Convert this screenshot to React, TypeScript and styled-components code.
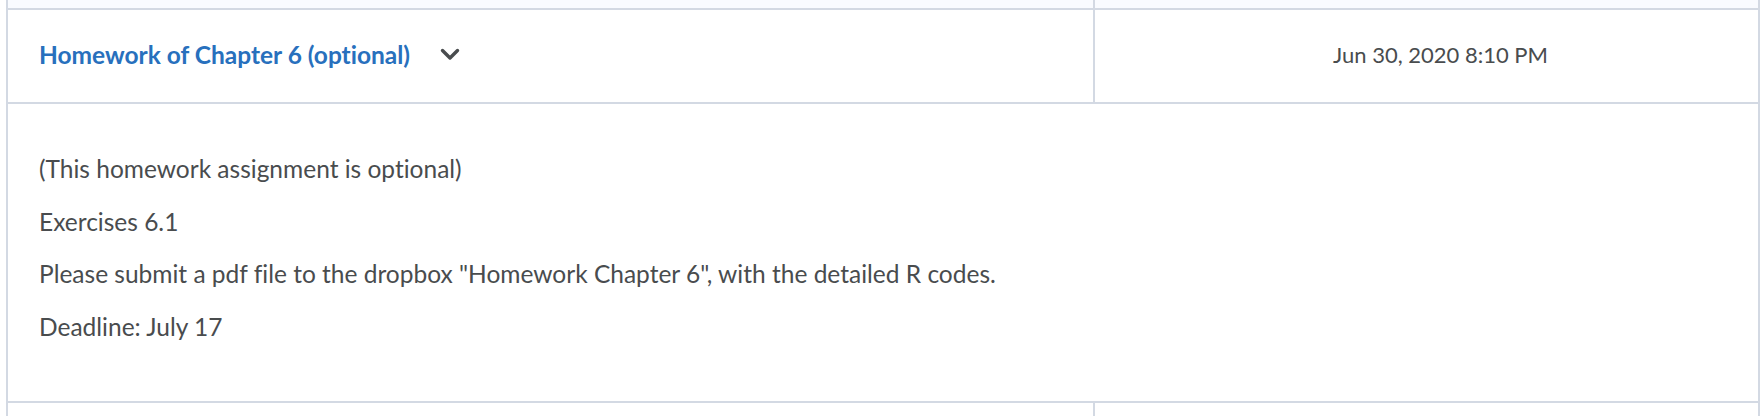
import React from "react";
import styled, { createGlobalStyle } from "styled-components";

const Global = createGlobalStyle`
  html, body { margin: 0; padding: 0; background: #ffffff; }
  body {
    font-family: Lato, "Open Sans", "Liberation Sans", sans-serif;
    color: #494c4e;
    font-variant-ligatures: none;
    font-feature-settings: "liga" 0, "clig" 0;
  }
`;

const Page = styled.div`
  padding-left: 6px;
  width: 1754px;
  height: 416px;
  overflow: hidden;
`;

const Board = styled.div`
  border-left: 2px solid #d3d9e3;
  border-right: 2px solid #d3d9e3;
`;

const Row = styled.div<{ $height: number; $tint?: boolean; $last?: boolean }>`
  display: grid;
  grid-template-columns: 1087px 1fr;
  height: ${(p) => p.$height}px;
  box-sizing: content-box;
  background: ${(p) => (p.$tint ? "#f9fbff" : "#ffffff")};
  border-bottom: ${(p) => (p.$last ? "none" : "2px solid #d3d9e3")};
`;

const Cell = styled.div<{ $center?: boolean }>`
  display: flex;
  align-items: center;
  justify-content: ${(p) => (p.$center ? "center" : "flex-start")};
  padding-left: ${(p) => (p.$center ? 28 : 31)}px;
  padding-bottom: 4px;
  &:first-child {
    border-right: 2px solid #d3d9e3;
  }
`;

const TitleLink = styled.a`
  font-family: Lato, "Open Sans", sans-serif;
  font-weight: 700;
  font-size: 24.5px;
  color: #2870bd;
  text-decoration: none;
  cursor: pointer;
`;

const Toggle = styled.button`
  display: inline-flex;
  align-items: center;
  justify-content: center;
  margin-left: 28px;
  padding: 0;
  border: none;
  background: transparent;
  width: 24px;
  height: 24px;
  color: #494c4e;
  cursor: pointer;
`;

const DateText = styled.span`
  font-size: 22px;
  color: #494c4e;
`;

const Detail = styled.div`
  height: 299px;
  border-bottom: 2px solid #d3d9e3;
  padding: 50px 31px 0;
  box-sizing: border-box;
  display: flex;
  flex-direction: column;
  gap: 22.5px;
`;

const Para = styled.p`
  margin: 0;
  font-size: 24.5px;
  line-height: 30px;
  color: #494c4e;
`;

export default function App() {
  return (
    <>
      <Global />
      <Page>
        <Board>
          <Row $height={8} $tint>
            <Cell />
            <Cell />
          </Row>
          <Row $height={92}>
            <Cell>
              <TitleLink>Homework of Chapter 6 (optional)</TitleLink>
              <Toggle aria-label="expand">
                <svg width="20" height="13" viewBox="0 0 20 13">
                  <path
                    d="M2.5 2.5 L10 10 L17.5 2.5"
                    fill="none"
                    stroke="currentColor"
                    strokeWidth="3.4"
                    strokeLinecap="round"
                    strokeLinejoin="round"
                  />
                </svg>
              </Toggle>
            </Cell>
            <Cell $center>
              <DateText>Jun 30, 2020 8:10 PM</DateText>
            </Cell>
          </Row>
          <Detail>
            <Para>(This homework assignment is optional)</Para>
            <Para>Exercises 6.1</Para>
            <Para>
              Please submit a pdf file to the dropbox "Homework Chapter 6", with the detailed R codes.
            </Para>
            <Para>Deadline: July 17</Para>
          </Detail>
          <Row $height={20} $last>
            <Cell />
            <Cell />
          </Row>
        </Board>
      </Page>
    </>
  );
}
